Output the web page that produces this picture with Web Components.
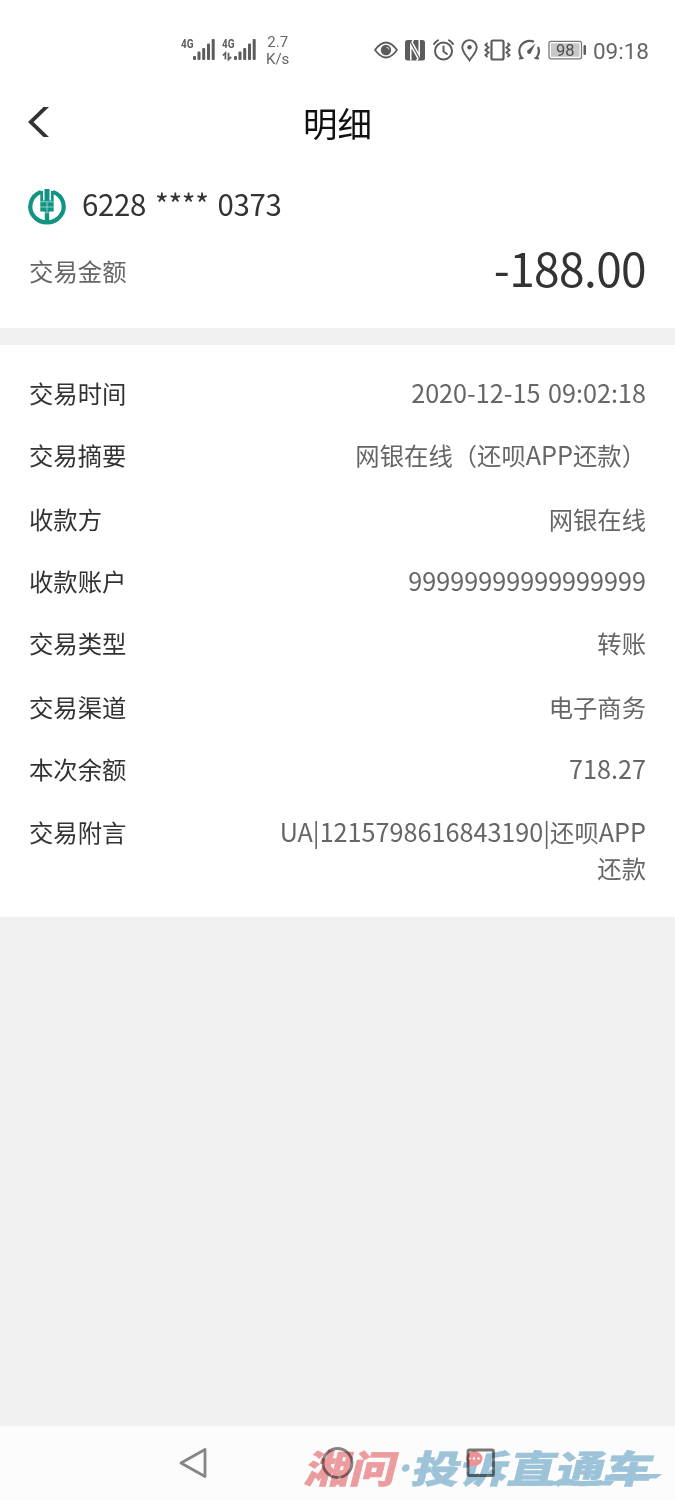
<!DOCTYPE html>
<html lang="zh-CN">
<head>
<meta charset="utf-8">
<title>明细</title>
<style>
  body {
    margin: 0;
    background: #f0f0f0;
    font-family: "Noto Sans CJK SC", sans-serif;
  }
</style>
</head>
<body>
<detail-page></detail-page>

<script>
const BARS = `
    <g fill="#5c5c5c"><rect x="12" y="18" width="3" height="4" rx="1"/><rect x="16.5" y="13.5" width="3" height="8.5" rx="1"/><rect x="21.2" y="10" width="3" height="12" rx="1"/><rect x="26" y="5.5" width="3" height="16.5" rx="1"/><rect x="30.7" y="1" width="3" height="21" rx="1"/></g>
    <text x="0" y="10" font-family="Roboto, sans-serif" font-weight="700" font-size="13" textLength="12.5" lengthAdjust="spacingAndGlyphs" fill="#5c5c5c">4G</text>`;

const ICONS = {
  signal: [34, 24, BARS],
  signalData: [34, 24, `${BARS}
    <path d="M.8 17.5L3.4 15V21.5M6.5 14.8V21.5L9.2 18.8" fill="none" stroke="#5c5c5c" stroke-width="1.7"/>`],
  eye: [24, 24, `
    <path d="M1 12Q12-3 23 12Q12 27 1 12Z" fill="none" stroke="#5c5c5c" stroke-width="1.8" stroke-linejoin="round"/>
    <circle cx="12" cy="12" r="5.2" fill="#5c5c5c"/><path d="M12.5 9a3 3 0 0 1 2.5 2.5" fill="none" stroke="#ccc" stroke-width="1.2"/>`],
  nfc: [22, 24, `
    <rect x="1" y="2" width="20" height="20.5" rx="2.5" fill="#5c5c5c"/>
    <path d="M6.8 22.5V7.5L14 20.5L12.5 22.5M15.2 2V17L8 4L9.5 2" fill="none" stroke="#fff" stroke-width="1.5"/>`],
  alarm: [23, 24, `
    <g fill="none" stroke="#5c5c5c" stroke-width="2" stroke-linecap="round"><circle cx="11.5" cy="13" r="8.5"/><path d="M11.5 8.5V13.5L15 16M2 6Q3.5 3.5 6 2.3M21 6Q19.5 3.5 17 2.3"/></g>`],
  pin: [17, 24, `
    <path d="M8.5 22.3C6.5 19 1.3 14.5 1.3 9.3A7.2 7.2 0 0 1 15.7 9.3C15.7 14.5 10.5 19 8.5 22.3Z" fill="none" stroke="#5c5c5c" stroke-width="1.9"/><circle cx="8.5" cy="9.3" r="2.2" fill="#5c5c5c"/>`],
  vibrate: [27, 24, `
    <g fill="none" stroke="#5c5c5c" stroke-width="2.2"><rect x="7.5" y="2.5" width="12" height="19" rx="1.5"/><path d="M3.5 5L1.5 7L4.5 9.5L1.5 12L4.5 14.5L1.5 17L3.5 19M23.5 5L25.5 7L22.5 9.5L25.5 12L22.5 14.5L25.5 17L23.5 19" stroke-width="1.9"/></g>`],
  gauge: [24, 24, `
    <path d="M2 20.5L6.5 20M4.5 19.5A10.3 10.3 0 0 1 17 3.8M21 9A10.3 10.3 0 0 1 19.5 19.5M22 20.5L17.5 20" fill="none" stroke="#5c5c5c" stroke-width="2.2"/>
    <path d="M10.5 12.5L18.5 5.5L13.8 15A2 2 0 1 1 10.5 12.5Z" fill="#5c5c5c"/>`],
  battery: [39, 24, `
    <rect x="1" y="3.3" width="32.5" height="17.5" rx="2" fill="#fff" stroke="#777" stroke-width="1.3"/><rect x="3" y="5.3" width="28.5" height="13.5" fill="#c8c8c8"/><rect x="35.5" y="7" width="2.5" height="10" rx="1" fill="#5c5c5c"/>
    <text x="17.3" y="17.6" text-anchor="middle" font-family="Roboto, sans-serif" font-size="16.5" fill="#4c4c4c">98</text>`],
  chevron: [24, 32, `
    <path d="M16.5 1H22L6.5 16L22 31H16.5L1 16Z" fill="#333"/>`],
  bank: [38, 36, `
    <path d="M13 2.9A16.7 15.8 0 1 0 25 2.9" fill="none" stroke="#109483" stroke-width="4.2"/>
    <path d="M16.5 0H21.5V11.5H23V2H25.7V22.5H21.2V34H16.8V22.5H12.3V2H15V11.5H16.5Z" fill="#109483"/>
    <path d="M12 12.8H26M12 18H26M19 13V23M16.5 23.8H21.5" stroke="#b5ddd7" stroke-width=".8"/>`],
  navBack: [30, 34, `
    <path d="M26 3.5V30.5L2 17Z" fill="none" stroke="#858585" stroke-width="2.8" stroke-linejoin="round"/>`],
  navHome: [34, 34, `
    <circle cx="16.5" cy="17" r="14.5" fill="none" stroke="#858585" stroke-width="2.8"/>`],
  navRecent: [30, 34, `
    <rect x="1" y="4" width="25.5" height="25.5" rx="1.5" fill="none" stroke="#777" stroke-width="2.8"/>`]
};

class UiIcon extends HTMLElement {
  constructor() {
    super();
    this.attachShadow({ mode: "open" });
  }

  connectedCallback() {
    const [w, h, body] = ICONS[this.getAttribute("name")];
    this.shadowRoot.innerHTML = /* html */`
    <style>
      :host { display: block; flex: none; }
      svg { display: block; overflow: visible; }
    </style>
    <svg width="${w}" height="${h}" viewBox="0 0 ${w} ${h}">${body}</svg>`;
  }
}

class StatusBar extends HTMLElement {
  constructor() {
    super();
    this.attachShadow({ mode: "open" });
  }

  static get styles() {
    return /* css */`
      :host {
        display: flex;
        align-items: center;
        justify-content: space-between;
        height: 84px;
        padding: 16px 26px 0 181px;
        box-sizing: border-box;
        color: #666;
        font-family: Roboto, sans-serif;
      }
      .left, .right {
        display: flex;
        align-items: center;
        gap: 6px;
      }
      .left { gap: 7px; }
      .speed {
        margin: 1px 0 0 3px;
        font-size: 15px;
        line-height: 17px;
        text-align: center;
      }
      .battery { margin-left: .5px; }
      .time {
        font-size: 22.5px;
        line-height: 24px;
        margin-top: 1px;
      }
    `;
  }

  connectedCallback() {
    this.shadowRoot.innerHTML = /* html */`
    <style>${StatusBar.styles}</style>
    <div class="left">
      <ui-icon name="signal"></ui-icon>
      <ui-icon name="signalData"></ui-icon>
      <div class="speed">2.7<br>K/s</div>
    </div>
    <div class="right">
      <ui-icon name="eye"></ui-icon>
      <ui-icon name="nfc"></ui-icon>
      <ui-icon name="alarm"></ui-icon>
      <ui-icon name="pin"></ui-icon>
      <ui-icon name="vibrate"></ui-icon>
      <ui-icon name="gauge"></ui-icon>
      <ui-icon class="battery" name="battery"></ui-icon>
      <span class="time">09:18</span>
    </div>`;
  }
}

class TitleBar extends HTMLElement {
  constructor() {
    super();
    this.attachShadow({ mode: "open" });
  }

  connectedCallback() {
    this.shadowRoot.innerHTML = /* html */`
    <style>
      :host {
        display: grid;
        grid-template-columns: 1fr auto 1fr;
        align-items: center;
        height: 76px;
        padding: 0 27px 2px;
      }
      h1 {
        margin: 0;
        font-size: 34.5px;
        font-weight: 400;
        line-height: 50px;
        color: #111;
      }
    </style>
    <ui-icon name="chevron"></ui-icon>
    <h1><slot></slot></h1>`;
  }
}

class AccountSummary extends HTMLElement {
  constructor() {
    super();
    this.attachShadow({ mode: "open" });
  }

  static get styles() {
    return /* css */`
      :host {
        display: block;
        height: 166px;
        padding: 19px 29px 0 28px;
        box-sizing: border-box;
      }
      .card {
        display: flex;
        align-items: center;
        gap: 16px;
        height: 44px;
        font-size: 29.4px;
        line-height: 44px;
        letter-spacing: -.28px;
        word-spacing: 2.5px;
        color: #333;
      }
      .card ui-icon { margin-top: 8px; }
      .amount {
        display: flex;
        align-items: center;
        justify-content: space-between;
        height: 90px;
        padding-left: 1px;
        font-size: 24.4px;
        color: #666;
      }
      .value {
        margin-top: -6px;
        font-size: 46px;
        line-height: 60px;
        letter-spacing: -.6px;
        color: #333;
      }
    `;
  }

  connectedCallback() {
    this.shadowRoot.innerHTML = /* html */`
    <style>${AccountSummary.styles}</style>
    <div class="card"><ui-icon name="bank"></ui-icon><slot name="card"></slot></div>
    <div class="amount"><span>交易金额</span><span class="value"><slot name="amount"></slot></span></div>`;
  }
}

class DetailRow extends HTMLElement {
  constructor() {
    super();
    this.attachShadow({ mode: "open" });
  }

  connectedCallback() {
    this.shadowRoot.innerHTML = /* html */`
    <style>
      :host {
        display: flex;
        justify-content: space-between;
        font-size: 24.35px;
        line-height: 36px;
        color: #666;
      }
      .label { color: #333; }
      .value {
        max-width: 380px;
        text-align: right;
      }
      ::slotted(.num) {
        font-size: 25.2px;
        line-height: 1;
        word-spacing: 2px;
      }
    </style>
    <span class="label">${this.getAttribute("label")}</span>
    <span class="value"><slot></slot></span>`;
  }
}

class WaterMark extends HTMLElement {
  constructor() {
    super();
    this.attachShadow({ mode: "open" });
  }

  connectedCallback() {
    this.shadowRoot.innerHTML = /* html */`
    <style>
      :host {
        display: block;
        mix-blend-mode: multiply;
      }
      svg { display: block; overflow: visible; }
      text {
        font-family: "Noto Sans CJK SC", sans-serif;
        font-weight: 900;
        font-size: 38px;
        stroke-width: .5px;
      }
    </style>
    <svg width="385" height="74" viewBox="290 1426 385 74">
      <g transform="translate(0 1483) skewX(-14)">
        <text x="303" y="-.5" fill="#ef9da0" stroke="#ef9da0" textLength="91" lengthAdjust="spacingAndGlyphs">湘问</text>
        <circle cx="402" cy="-15" r="3.8" fill="#9fc6dc"/>
        <text x="410" y="-.5" fill="#9fc6dc" stroke="#9fc6dc" textLength="240" lengthAdjust="spacingAndGlyphs">投诉直通车</text>
        <path d="M508-2H614L611 2.5H508ZM608-9H660L655-4.5H608Z" fill="#9fc6dc"/>
      </g>
      <path d="M474 1451a8.5 7.5 0 1 1-3 14.5l-4 2.5 1-5a8.5 7.5 0 0 1 6-12Z" fill="#ef9496"/>
      <g fill="#fff"><circle cx="469.5" cy="1458.5" r="1.2"/><circle cx="474" cy="1458.5" r="1.2"/><circle cx="478.5" cy="1458.5" r="1.2"/></g>
    </svg>`;
  }
}

class NavBar extends HTMLElement {
  constructor() {
    super();
    this.attachShadow({ mode: "open" });
  }

  connectedCallback() {
    this.shadowRoot.innerHTML = /* html */`
    <style>
      :host {
        position: relative;
        display: flex;
        justify-content: center;
        align-items: center;
        gap: 112px;
        height: 74px;
        background: #fcfcfc;
      }
      water-mark {
        position: absolute;
        right: 0;
        top: 0;
      }
    </style>
    <ui-icon name="navBack"></ui-icon>
    <ui-icon name="navHome"></ui-icon>
    <ui-icon name="navRecent"></ui-icon>
    <water-mark></water-mark>`;
  }
}

class DetailPage extends HTMLElement {
  constructor() {
    super();
    this.attachShadow({ mode: "open" });
  }

  static get styles() {
    return /* css */`
      :host {
        display: flex;
        flex-direction: column;
        width: 675px;
        height: 1500px;
        background: #f0f0f0;
      }
      header {
        height: 328px;
        background: #fff;
      }
      .rows {
        display: flex;
        flex-direction: column;
        gap: 26px;
        margin-top: 17px;
        height: 572px;
        padding: 30px 29px 0;
        box-sizing: border-box;
        background: #fff;
      }
      detail-row:nth-child(3), detail-row:nth-child(6) { margin-top: 2px; }
      detail-row:nth-child(8) { margin-top: 1px; }
      nav-bar { margin-top: auto; }
    `;
  }

  connectedCallback() {
    this.shadowRoot.innerHTML = /* html */`
    <style>${DetailPage.styles}</style>
    <header>
      <status-bar></status-bar>
      <title-bar>明细</title-bar>
      <account-summary>
        <span slot="card">6228 **** 0373</span>
        <span slot="amount">-188.00</span>
      </account-summary>
    </header>
    <div class="rows">
      <detail-row label="交易时间"><span class="num">2020-12-15 09:02:18</span></detail-row>
      <detail-row label="交易摘要">网银在线（还呗<span class="num">APP</span>还款）</detail-row>
      <detail-row label="收款方">网银在线</detail-row>
      <detail-row label="收款账户"><span class="num">99999999999999999</span></detail-row>
      <detail-row label="交易类型">转账</detail-row>
      <detail-row label="交易渠道">电子商务</detail-row>
      <detail-row label="本次余额"><span class="num">718.27</span></detail-row>
      <detail-row label="交易附言"><span class="num">UA|1215798616843190|</span>还呗<span class="num">APP</span><br>还款</detail-row>
    </div>
    <nav-bar></nav-bar>`;
  }
}

customElements.define("ui-icon", UiIcon);
customElements.define("status-bar", StatusBar);
customElements.define("title-bar", TitleBar);
customElements.define("account-summary", AccountSummary);
customElements.define("detail-row", DetailRow);
customElements.define("water-mark", WaterMark);
customElements.define("nav-bar", NavBar);
customElements.define("detail-page", DetailPage);
</script>
</body>
</html>
